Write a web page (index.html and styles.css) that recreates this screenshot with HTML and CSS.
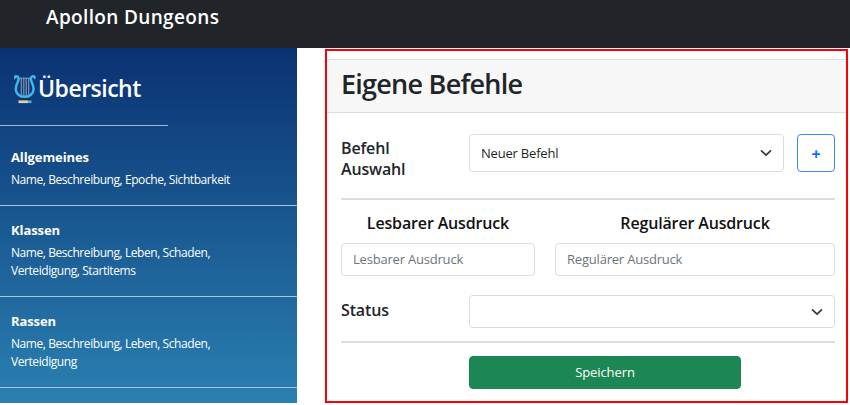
FILE: index.html
```html
<!DOCTYPE html>
<html lang="de">
<head>
<meta charset="utf-8">
<title>Apollon Dungeons</title>
<link rel="stylesheet" href="styles.css">
</head>
<body>
<header class="navbar"><span class="brand">Apollon Dungeons</span></header>
<div class="layout">
  <nav class="sidebar">
    <div class="sidebar-head">
      <svg class="lyre" viewBox="0 0 22 29" aria-hidden="true">
        <path d="M7.300 3v18M9.800 3v18M12.200 3v18M14.700 3v18" stroke="#8b9cb4" stroke-width="1.100"/>
        <path d="M4 3.200h14" stroke="#6f91a8" stroke-width="1.300"/>
        <path d="M1.500 3.500C.2 2.400 1 1 2.500 1.300c2.500.4 2.500 2.800 1.500 5C2.600 9.300 1.700 11.500 1.800 14.300c.3 4.900 4.500 7.500 8.900 7.500s8.600-2.600 8.900-7.500c.1-2.800-.8-5-2.200-8-1-2.200-1-4.600 1.500-5 1.500-.3 2.300 1.100 1 2.200" fill="none" stroke="#3db8ea" stroke-width="2.500"/>
        <path d="M5.500 23.200h11v2.200h-11z" fill="#252e36"/>
        <path d="M4.500 25.400h9.500v2.700H4.500z" fill="#d6d2c6"/>
        <path d="M14 25.400h3.500v2.700H14z" fill="#3db4e3"/>
      </svg>
      <h2 class="sidebar-title">Übersicht</h2>
    </div>
    <div class="short-rule"></div>
    <section class="entry entry-first">
      <h3 class="entry-title">Allgemeines</h3>
      <p class="entry-text">Name, Beschreibung, Epoche, Sichtbarkeit</p>
    </section>
    <section class="entry">
      <h3 class="entry-title">Klassen</h3>
      <p class="entry-text">Name, Beschreibung, Leben, Schaden,<br>Verteidigung, Startitems</p>
    </section>
    <section class="entry">
      <h3 class="entry-title">Rassen</h3>
      <p class="entry-text">Name, Beschreibung, Leben, Schaden,<br>Verteidigung</p>
    </section>
  </nav>
  <main class="panel">
    <div class="panel-head"><h1 class="panel-title">Eigene Befehle</h1></div>
    <form class="panel-body">
      <div class="row row-command">
        <label class="label">Befehl<br>Auswahl</label>
        <div class="field select select-tall"><span>Neuer Befehl</span>
          <svg class="chevron" viewBox="0 0 12 12"><path d="M1.500 3.800 6 8.200l4.500-4.400"/></svg></div>
        <button type="button" class="add">+</button>
      </div>
      <div class="rule"></div>
      <div class="row row-expr">
        <div><div class="label label-center">Lesbarer Ausdruck</div>
          <input class="field input" placeholder="Lesbarer Ausdruck"></div>
        <div><div class="label label-center">Regulärer Ausdruck</div>
          <input class="field input" placeholder="Regulärer Ausdruck"></div>
      </div>
      <div class="row row-status">
        <label class="label">Status</label>
        <div class="field select"><span></span>
          <svg class="chevron" viewBox="0 0 12 12"><path d="M1.500 3.800 6 8.200l4.500-4.400"/></svg></div>
      </div>
      <div class="rule"></div>
      <button type="button" class="save">Speichern</button>
    </form>
  </main>
</div>
</body>
</html>
```
FILE: styles.css
```css
* { box-sizing: border-box; }
body {
  margin: 0;
  height: 405px;
  overflow: hidden;
  background: #fff;
  color: #212529;
  font-family: "Open Sans", "Noto Sans", sans-serif;
}
h1, h2, h3, p { margin: 0; }
.navbar { height: 48px; background: #212529; padding: 4px 0 0 46px; }
.brand { display: block; color: #fff; font-size: 19px; line-height: 27px; font-weight: 600; letter-spacing: 0.35px; white-space: nowrap; }
.layout { display: flex; align-items: flex-start; height: 357px; }
.sidebar {
  width: 296.500px;
  height: 354.500px;
  flex: none;
  overflow: hidden;
  color: #fff;
  background: linear-gradient(180deg, #0a3272 0%, #2a80b2 100%);
}
.sidebar-head { display: flex; height: 77px; padding: 27px 0 0 14px; }
.lyre { width: 22px; height: 29px; flex: none; }
.sidebar-title { margin-left: 2px; font-size: 23px; line-height: 27px; font-weight: 600; letter-spacing: -0.5px; }
.short-rule { width: 168px; height: 1px; background: #a3b9d0; }
.entry { height: 91px; padding: 15px 0 0 11px; border-bottom: 1px solid #a9c3d9; }
.entry-first { height: 80px; padding-top: 22px; }
.entry-title { font-size: 13px; line-height: 18px; font-weight: 700; letter-spacing: -0.1px; }
.entry-text { margin-top: 5px; font-size: 12px; line-height: 18px; letter-spacing: -0.43px; white-space: nowrap; }
.panel {
  width: 523px;
  height: 354px;
  flex: none;
  margin: 1px 0 0 28.500px;
  border: 2px solid #fb0007;
  padding-top: 8px;
}
.panel-head { height: 54px; background: #f7f7f7; border: solid #dedede; border-width: 1px 0; padding: 6px 0 0 14px; }
.panel-title { font-size: 27px; line-height: 36px; font-weight: 600; letter-spacing: -0.75px; }
.panel-body { padding: 21px 11px 0 14px; }
.row { display: grid; }
.row-command { grid-template-columns: 115px 315px 38px; column-gap: 13px; height: 64px; }
.label { font-size: 16px; line-height: 21px; font-weight: 600; letter-spacing: -0.15px; color: #212529; }
.row-command .label { padding-top: 4px; }
.label-center { text-align: center; height: 30px; color: #111; }
.field {
  display: flex;
  align-items: center;
  width: 100%;
  height: 33px;
  padding: 0 11px;
  border: 1px solid #d8dde2;
  border-radius: 4px;
  background: #fff;
  font-family: inherit;
  font-size: 13px;
  letter-spacing: -0.2px;
  color: #212529;
}
.input { padding-bottom: 2px; }
.field::placeholder { color: #6c757d; opacity: 1; }
.select { justify-content: space-between; }
.select-tall { height: 38px; }
.chevron { width: 12px; height: 12px; fill: none; stroke: #343a40; stroke-width: 1.700; stroke-linecap: round; stroke-linejoin: round; }
.add {
  height: 38px;
  padding: 2px 0 0;
  border: 1px solid #3b88fd;
  border-radius: 4px;
  background: #fff;
  color: #0d6efd;
  font: 700 16px "Open Sans", sans-serif;
}
.rule { height: 2px; background: #dcdcdc; }
.row-expr { grid-template-columns: 194px 280px; column-gap: 20px; padding-top: 13px; height: 95px; }
.row-status { grid-template-columns: 115px 366px; column-gap: 13px; height: 46px; }
.row-status .label { padding-top: 5px; }
.save {
  display: block;
  width: 272px;
  height: 33px;
  margin: 13px 0 0 128px;
  padding: 0 0 2px;
  border: 1px solid #198754;
  border-radius: 4px;
  background: #1a8754;
  color: #fff;
  font: 400 13px "Open Sans", sans-serif;
  letter-spacing: -0.1px;
}
```
